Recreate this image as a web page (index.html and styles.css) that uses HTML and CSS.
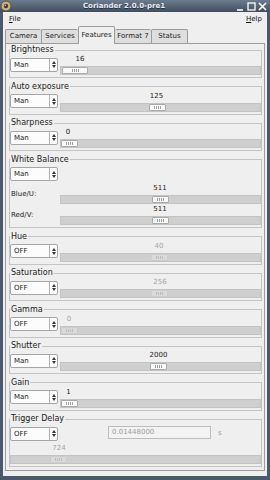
FILE: index.html
```html
<!DOCTYPE html>
<html>
<head>
<meta charset="utf-8">
<link rel="stylesheet" href="styles.css">
</head>
<body>
<div class="window">
  <div class="titlebar">
    <span class="appicon"><svg width="12" height="12" viewBox="0 0 12 12"><circle cx="6" cy="6" r="5" fill="#c8b27c" stroke="#5e5035" stroke-width="1"/><circle cx="6" cy="6" r="2.2" fill="#3c3c44"/><circle cx="5.3" cy="5.3" r="0.7" fill="#ddd"/></svg></span>
    <span class="title">Coriander 2.0.0-pre1</span>
    <span class="wbtns">
      <svg width="9" height="9" viewBox="0 0 9 9"><path d="M1 8H7" stroke="#fff" stroke-width="1.6"/></svg>
      <svg width="9" height="9" viewBox="0 0 9 9"><rect x="1" y="1" width="7" height="7" fill="none" stroke="#fff" stroke-width="1.3"/></svg>
      <svg width="9" height="9" viewBox="0 0 9 9"><path d="M1 1L8 8M8 1L1 8" stroke="#fff" stroke-width="1.6"/></svg>
    </span>
  </div>
  <div class="client">
    <div class="menubar"><span><u>F</u>ile</span><span><u>H</u>elp</span></div>
    <div class="tabs">
      <div class="tab">Camera</div>
      <div class="tab">Services</div>
      <div class="tab active">Features</div>
      <div class="tab">Format 7</div>
      <div class="tab">Status</div>
    </div>
    <div class="page">

      <fieldset class="frame">
        <legend>Brightness</legend>
        <div class="row">
          <div class="combo"><span>Man</span><i class="spin"></i></div>
          <div class="scale">
            <div class="val" style="margin-left:5px">16</div>
            <div class="trough"><div class="thumb" style="margin-left:1px;width:26px"></div></div>
          </div>
        </div>
      </fieldset>

      <fieldset class="frame">
        <legend>Auto exposure</legend>
        <div class="row">
          <div class="combo"><span>Man</span><i class="spin"></i></div>
          <div class="scale">
            <div class="val" style="margin-left:81.5px">125</div>
            <div class="trough"><div class="thumb" style="margin-left:88px"></div></div>
          </div>
        </div>
      </fieldset>

      <fieldset class="frame">
        <legend>Sharpness</legend>
        <div class="row">
          <div class="combo"><span>Man</span><i class="spin"></i></div>
          <div class="scale">
            <div class="val" style="margin-left:-7px">0</div>
            <div class="trough"><div class="thumb" style="margin-left:0px"></div></div>
          </div>
        </div>
      </fieldset>

      <fieldset class="frame">
        <legend>White Balance</legend>
        <div class="row">
          <div class="combo"><span>Man</span><i class="spin"></i></div>
        </div>
        <div class="wbrow first">
          <div class="wblabel">Blue/U:</div>
          <div class="scale">
            <div class="val" style="margin-left:85px">511</div>
            <div class="trough"><div class="thumb" style="margin-left:91px"></div></div>
          </div>
        </div>
        <div class="wbrow">
          <div class="wblabel">Red/V:</div>
          <div class="scale">
            <div class="val" style="margin-left:85px">511</div>
            <div class="trough"><div class="thumb" style="margin-left:91px"></div></div>
          </div>
        </div>
      </fieldset>

      <fieldset class="frame off">
        <legend>Hue</legend>
        <div class="row">
          <div class="combo"><span>OFF</span><i class="spin"></i></div>
          <div class="scale">
            <div class="val" style="margin-left:84px">40</div>
            <div class="trough"><div class="thumb" style="margin-left:90px"></div></div>
          </div>
        </div>
      </fieldset>

      <fieldset class="frame off">
        <legend>Saturation</legend>
        <div class="row">
          <div class="combo"><span>OFF</span><i class="spin"></i></div>
          <div class="scale">
            <div class="val" style="margin-left:85px">256</div>
            <div class="trough"><div class="thumb" style="margin-left:90px"></div></div>
          </div>
        </div>
      </fieldset>

      <fieldset class="frame off">
        <legend>Gamma</legend>
        <div class="row">
          <div class="combo"><span>OFF</span><i class="spin"></i></div>
          <div class="scale">
            <div class="val" style="margin-left:-6px">0</div>
            <div class="trough"><div class="thumb" style="margin-left:0px"></div></div>
          </div>
        </div>
      </fieldset>

      <fieldset class="frame">
        <legend>Shutter</legend>
        <div class="row">
          <div class="combo"><span>Man</span><i class="spin"></i></div>
          <div class="scale">
            <div class="val" style="margin-left:83.5px">2000</div>
            <div class="trough"><div class="thumb" style="margin-left:89px"></div></div>
          </div>
        </div>
      </fieldset>

      <fieldset class="frame">
        <legend>Gain</legend>
        <div class="row">
          <div class="combo"><span>Man</span><i class="spin"></i></div>
          <div class="scale">
            <div class="val" style="margin-left:-6.5px">1</div>
            <div class="trough"><div class="thumb" style="margin-left:0px"></div></div>
          </div>
        </div>
      </fieldset>

      <fieldset class="frame off last">
        <legend>Trigger Delay</legend>
        <div class="row">
          <div class="combo"><span>OFF</span><i class="spin"></i></div>
          <div class="entry">0.01448000</div>
          <div class="unit">s</div>
        </div>
        <div class="scale full">
          <div class="val" style="margin-left:34px">724</div>
          <div class="trough"><div class="thumb" style="margin-left:39px"></div></div>
        </div>
      </fieldset>

    </div>
  </div>
</div>
</body>
</html>
```

FILE: styles.css
```css
* { box-sizing: border-box; }
html, body { margin: 0; padding: 0; }
body {
  width: 270px;
  height: 480px;
  overflow: hidden;
  font-family: "DejaVu Sans", sans-serif;
  font-size: 7px;
  color: #222;
}
.window {
  width: 270px;
  height: 480px;
  display: flex;
  flex-direction: column;
  background: #4b596c;
}
.titlebar {
  height: 12px;
  flex: none;
  display: flex;
  align-items: center;
  background: linear-gradient(#6d7b8e, #414e60);
  color: #e9eef4;
}
.appicon { width: 12px; height: 12px; display: flex; margin-left: 0; }
.title {
  flex: 1;
  text-align: center;
  font-weight: bold;
  font-size: 7px;
  line-height: 12px;
  text-shadow: 0 1px 0 #27303c;
}
.wbtns {
  width: 34px;
  display: flex;
  gap: 2px;
  padding-right: 3px;
  align-items: center;
}
.client {
  flex: 1;
  margin: 0 3px 4px;
  background: #efefef;
  display: flex;
  flex-direction: column;
  padding: 0 2px 5px;
}
.menubar {
  height: 14px;
  flex: none;
  display: flex;
  justify-content: space-between;
  align-items: center;
  padding: 0 3px 0 4px;
  color: #111;
}
.tabs {
  height: 17px;
  flex: none;
  display: grid;
  grid-template-columns: 36px 37px 37px 36px 37px;
  align-items: end;
}
.tab {
  height: 14px;
  border: 1px solid #9c9c9c;
  border-bottom: none;
  border-right: none;
  background: #dedede;
  text-align: center;
  line-height: 13px;
  border-radius: 2px 2px 0 0;
  color: #1c1c1c;
}
.tab:last-child { border-right: 1px solid #9c9c9c; }
.tab.active {
  height: 18px;
  margin-bottom: -1px;
  background: #efefef;
  border-right: 1px solid #9c9c9c;
  line-height: 16px;
  position: relative;
  z-index: 1;
}
.tab.active + .tab { border-left: none; }
.page {
  flex: 1;
  border: 1px solid #9c9c9c;
  background: #efefef;
  padding: 1px 2px 0 3px;
  display: flex;
  flex-direction: column;
}
.frame {
  margin: 0 0 3.5px;
  padding: 0 0 2px;
  border: 1px solid #c4c4c4;
  min-width: 0;
}
.frame legend {
  font-size: 8px;
  line-height: 10px;
  padding: 0 1px;
  color: #222;
}
.row {
  display: flex;
  align-items: flex-start;
  gap: 2px;
}
.combo {
  width: 48px;
  height: 14px;
  flex: none;
  margin-top: 2.5px;
  border: 1px solid #a6a6a6;
  border-radius: 2px;
  background: #fcfcfc;
  display: flex;
  align-items: center;
  padding-left: 3px;
}
.combo span { flex: 1; color: #1a1a1a; }
.spin {
  width: 8px;
  height: 100%;
  border-left: 1px solid #b4b4b4;
  position: relative;
  display: flex;
  flex-direction: column;
  justify-content: center;
  align-items: center;
  gap: 1px;
}
.spin::before, .spin::after {
  content: "";
  width: 0;
  height: 0;
  border-left: 2px solid transparent;
  border-right: 2px solid transparent;
}
.spin::before { border-bottom: 3px solid #333; }
.spin::after { border-top: 3px solid #333; }
.scale { flex: 1; min-width: 0; }
.val {
  width: 30px;
  height: 9px;
  line-height: 9px;
  text-align: center;
  color: #222;
}
.trough {
  height: 9px;
  margin-top: 2px;
  background: #cfcfcf;
  border: 1px solid #c3c3c3;
  display: flex;
  align-items: center;
}
.thumb {
  width: 17px;
  height: 7px;
  flex: none;
  background: #f9f9f9;
  border: 1px solid #aaaaaa;
  border-radius: 1px;
  display: flex;
  justify-content: center;
  align-items: center;
}
.thumb::after {
  content: "";
  width: 7px;
  height: 3px;
  background: repeating-linear-gradient(90deg, #a0a0a0 0 1px, transparent 1px 2px);
}
.off .val { color: #a4a4a4; }
.off .thumb { background: #dadada; border-color: #cdcdcd; }
.off .thumb::after { background: repeating-linear-gradient(90deg, #bdbdbd 0 1px, transparent 1px 2px); }
.wbrow {
  display: flex;
  align-items: center;
  gap: 2px;
  margin-top: 1px;
}
.wbrow.first { margin-top: 3px; }
.wblabel {
  width: 48px;
  flex: none;
  padding-left: 1px;
  color: #222;
}
.entry {
  width: 103px;
  height: 13px;
  margin-top: 2px;
  margin-left: 48px;
  border: 1px solid #bdbdbd;
  background: #f3f3f3;
  color: #9c9c9c;
  line-height: 11px;
  padding-left: 3px;
}
.unit {
  margin-left: 5px;
  margin-top: 5px;
  color: #999;
}
.scale.full { margin-top: 3px; }
```
